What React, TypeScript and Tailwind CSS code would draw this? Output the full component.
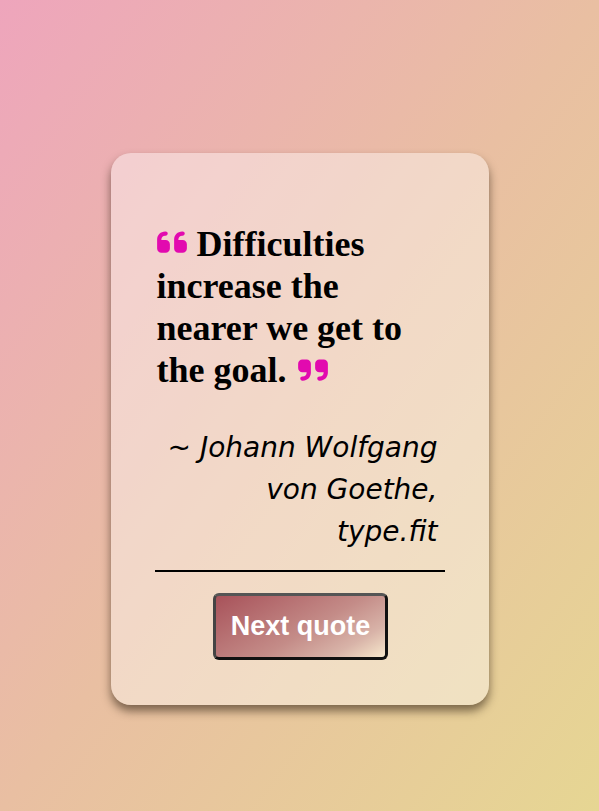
import React from "react";
import { FaQuoteLeft, FaQuoteRight } from "react-icons/fa6";

export default function App() {
  return (
    <div className="w-[599px] h-[811px] bg-[linear-gradient(to_bottom_right,#eea5bc_0%,#e9bfa2_50%,#e6d693_100%)] flex justify-center pt-[153px]">
      <div className="w-[378px] h-[552px] rounded-[20px] bg-white/40 shadow-[0_6px_10px_rgba(50,35,20,0.6)] pl-[46px] pr-[44px] pt-[70px] flex flex-col">
        <p className="font-['Liberation_Serif',serif] font-bold text-[36px] leading-[42px] text-black">
          <FaQuoteLeft className="inline-block text-[#e20aaf] w-[30px] h-[34px] align-baseline mr-[10px] -mb-[3px]" />
          Difficulties increase the nearer we get to the goal.
          <FaQuoteRight className="inline-block text-[#e20aaf] w-[30px] h-[34px] align-baseline ml-[11px] -mb-[5px]" />
        </p>
        <p className="mt-[36px] ml-auto w-[279px] text-right pr-[7px] font-['DejaVu_Sans',cursive] italic text-[28px] leading-[42px] text-black">
          ~ Johann Wolfgang von Goethe, type.fit
        </p>
        <div className="mt-[17px] -ml-[2px] h-[2px] bg-black" />
        <div className="flex justify-center mt-[21px]">
          <button className="w-[175px] h-[67px] rounded-[6px] border-[3px] border-t-[#555] border-l-[#444] border-b-[#111] border-r-[#111] bg-[linear-gradient(150deg,#a8525a_0%,#c48c88_55%,#d8b3a8_80%,#f7e8cc_100%)] text-white font-['Liberation_Sans',sans-serif] font-bold text-[27px]">
            Next quote
          </button>
        </div>
      </div>
    </div>
  );
}
